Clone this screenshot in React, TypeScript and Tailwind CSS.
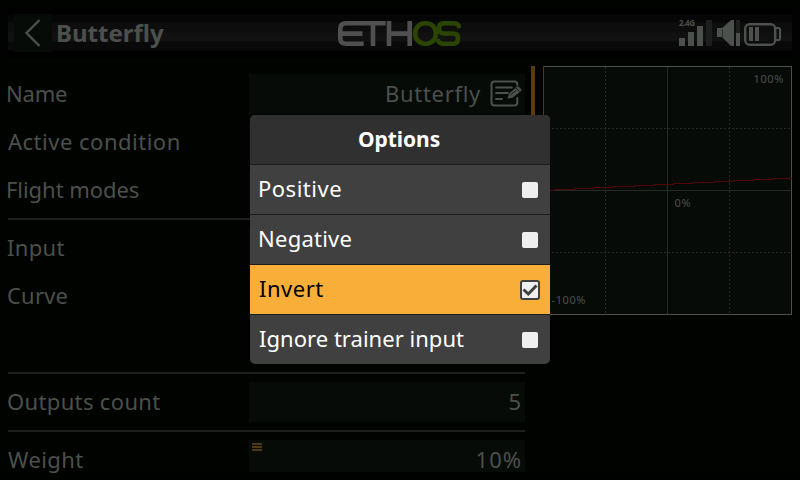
import React from "react";

type Option = { label: string; checked?: boolean; tracking: string };

const options: Option[] = [
  { label: "Positive", tracking: "tracking-[0.5px]" },
  { label: "Negative", tracking: "tracking-[0.25px]" },
  { label: "Invert", checked: true, tracking: "ml-px tracking-[0.5px]" },
  { label: "Ignore trainer input", tracking: "ml-px tracking-[0.03px]" },
];

function Logo() {
  return (
    <svg width="124" height="27" viewBox="337 20 124 27" fill="none" strokeWidth="4.600">
      <g stroke="#505050">
        <path d="M363.700 43.700H346Q340.300 43.700 340.300 38.500V28.500Q340.300 23.300 346 23.300H385.700M340.300 33.600H362.500M373 23V46" />
        <path d="M389 21V46M389 33.600H409.700M409.700 21V46" />
      </g>
      <g stroke="#2b4500">
        <rect x="415.300" y="23.300" width="20.500" height="20.400" rx="9.500" />
        <path d="M459.500 28Q458.500 23.300 453.500 23.300H444Q439 23.300 439 28.300Q439 33.500 444 33.500H453Q458 33.500 458 38.500Q458 43.700 453 43.700H443Q438.500 43.700 437.500 39" />
      </g>
    </svg>
  );
}

function Status() {
  return (
    <svg width="112" height="32" viewBox="676 16 112 32" fill="#4c514d">
      <text x="679" y="26" fontSize="8" fontWeight="700" fontFamily="Noto Sans, sans-serif" textLength="16">2.4G</text>
      <path d="M679 38h6v8h-6zM688 32h6v14h-6zM697 26h6v20h-6zM717 28h5l8-7q1-1 2-1h2v26h-2q-1 0-2-1l-8-8h-5zM736 33h4v13h-4z" />
      <path d="M706 20h6v26h-6zM736 20h4v13h-4z" fill="#1c201d" />
      <path d="M722.500 29v9" stroke="#2c302d" strokeWidth="1" />
      <rect x="745.200" y="24.200" width="30" height="20.600" rx="4.500" fill="none" stroke="#4c514d" strokeWidth="2.400" />
      <path d="M776 28h2.500q1.500 0 1.500 1.500v9q0 1.500-1.500 1.500H776" fill="none" stroke="#4c514d" strokeWidth="2" />
      <path d="M749 27h4v14h-4zM755 27h4v14h-4z" />
    </svg>
  );
}

function EditIcon() {
  return (
    <svg width="32" height="28" viewBox="0 0 32 28" fill="none" stroke="#4b504c" strokeWidth="2" strokeLinecap="round">
      <path d="M27.300 5V4.500Q27.300 1.500 24.300 1.500H4.500Q1.500 1.500 1.500 4.500V22.500Q1.500 25.500 4.500 25.500H24.300Q27.300 25.500 27.300 22.500V18" />
      <path d="M6 7.500H22M6 13H18M6 19H12" strokeWidth="1.800" />
      <path d="M17.500 18.500L19 13.700L27 6.500Q28 6 29 7L31 9Q32 10 31 11L22.500 17.700Z" fill="#4b504c" stroke="none" />
      <path d="M20.500 15L26 10.300M26 8L29.500 11.500" stroke="#080c09" strokeWidth=".8" />
    </svg>
  );
}

type RowProps = { label: string; children?: React.ReactNode; tracking: string; size?: string };

function Row({ label, children, tracking, size = "h-10 pb-0.5" }: RowProps) {
  return (
    <div className="flex shrink-0 justify-between">
      <span className={"flex items-center whitespace-nowrap leading-7 " + size + " " + tracking}>{label}</span>
      <div className={"mr-[5px] flex w-[276px] items-center justify-end bg-[#070b08] leading-7 " + size}>{children}</div>
    </div>
  );
}

function Divider() {
  return <div className="ml-[3px] mr-[5px] h-0.5 shrink-0 bg-[#1d201e]" />;
}

function Chart() {
  return (
    <svg width="249" height="249" viewBox="543 66 249 249" className="bg-[#070b08]" shapeRendering="crispEdges">
      <g fill="none" strokeWidth="1">
        <path d="M605.500 67V314M729.500 67V314M544 128.500H791M544 252.500H791" stroke="#252a27" strokeDasharray="2 2" />
        <path d="M667.500 67V314M544 190.500H791" stroke="#252a27" />
        <path d="M543 66.500H791.500V314.500H543" stroke="#4c514d" />
        <path d="M543.500 66V315" stroke="#523713" />
        <path d="M544 190.500H554V189.500H574V188.500H593V187.500H612V186.500H634V185.500H654V184.500H673V183.500H692V182.500H714V181.500H733V180.500H753V179.500H772V178.500H792" stroke="#510609" />
      </g>
      <g fill="#4b504c" fontFamily="Noto Sans, sans-serif" fontSize="11" letterSpacing="0.600">
        <text x="753.500" y="83">100%</text>
        <text x="674.500" y="207">0%</text>
        <text x="551.500" y="304">-100%</text>
      </g>
    </svg>
  );
}

function Checkbox({ checked }: { checked?: boolean }) {
  return checked ? (
    <svg width="20" height="20" viewBox="0 0 20 20" fill="none">
      <rect x="1" y="1" width="18" height="18" rx="2" fill="#efefef" stroke="#404040" strokeWidth="2" />
      <path d="M3.500 9.500L8.300 14L16.500 5.500" stroke="#404040" strokeWidth="3" />
    </svg>
  ) : (
    <span className="mr-0.5 size-4 rounded-[2px] bg-[#efefef]" />
  );
}

export default function App() {
  return (
    <div className="relative h-[480px] w-[800px] overflow-hidden bg-[#000300] font-['Noto_Sans',sans-serif] text-[22px] leading-none text-[#4b504c]">
      <header className="mx-2 flex h-[66px] items-start bg-[linear-gradient(to_bottom,#000300_8px,#000_9px,#000_14px,#060606_15px,#060606_22px,#0d0d0d_23px,#0d0d0d_32px,#111111_33px,#111111_41px,#080908_42px,#080908_50px,#000_51px,#000_57px,#000300_58px)]">
        <div className="ml-1.5 mt-3.5 flex h-[38px] w-[38px] items-center justify-center bg-[#070b08]">
          <svg width="20" height="30" viewBox="0 0 20 30" fill="none" stroke="#4b504c" strokeWidth="2.400"><path d="M16.500 2L3.500 15L16.500 28" /></svg>
        </div>
        <h1 className="ml-1 mt-[18px] w-[281px] text-[24px] font-bold leading-[30px]">Butterfly</h1>
        <div className="mt-5 w-[124px]"><Logo /></div>
        <div className="ml-auto mr-1 mt-4"><Status /></div>
      </header>
      <main className="flex items-start">
        <section className="ml-[5px] mt-2 flex w-[525px] flex-col gap-2">
          <Row label="Name" tracking="ml-px tracking-[-0.2px]">
            <span className="mr-[9px] tracking-[0.7px]">Butterfly</span>
            <div className="mr-[3px] mt-0.5"><EditIcon /></div>
          </Row>
          <Row label="Active condition" tracking="ml-[3px] tracking-[0.5px]" />
          <Row label="Flight modes" tracking="ml-px tracking-[-0.05px]" />
          <Divider />
          <Row label="Input" tracking="ml-[2px] tracking-[0.3px]" />
          <Row label="Curve" tracking="ml-[2px] tracking-[0.2px]" />
          <div className="h-10 shrink-0" />
          <Divider />
          <Row label="Outputs count" tracking="ml-[2px] tracking-[0.35px]"><span className="mr-1">5</span></Row>
          <Divider />
          <Row label="Weight" tracking="ml-[3px] tracking-[0.4px]" size="h-8 pt-1.5">
            <svg width="10" height="8" className="-mt-0.5 mb-auto ml-[3px] mr-auto -translate-y-px" fill="#523713"><path d="M0 0h10v2H0zM0 3h10v2H0zM0 6h10v2H0z" /></svg>
            <span className="mr-[3px] tracking-[1px]">10%</span>
          </Row>
        </section>
        <div className="ml-px h-[120px] w-1 bg-[#5a3b12]" />
        <div className="ml-2"><Chart /></div>
      </main>
      <div className="absolute inset-x-0 bottom-0 h-0.5 bg-black" />
      <div role="dialog" className="absolute left-[250px] top-[115px] w-[300px] overflow-hidden rounded-[5px] bg-[#404040] text-white">
        <h2 className="flex h-[49px] items-center justify-center bg-[#303030] pb-px pr-0.5 text-[21px] font-bold leading-7 tracking-[-0.05px]">Options</h2>
        {options.map((o) => (
          <div key={o.label} className={"flex h-[50px] items-center justify-between border-t border-[#1c1c1c] pl-2 pr-2.5 " + (o.checked ? "bg-[#f8ae38] text-black" : "")}>
            <span className={"-mt-[3px] whitespace-nowrap leading-7 " + o.tracking}>{o.label}</span>
            <Checkbox checked={o.checked} />
          </div>
        ))}
      </div>
    </div>
  );
}
